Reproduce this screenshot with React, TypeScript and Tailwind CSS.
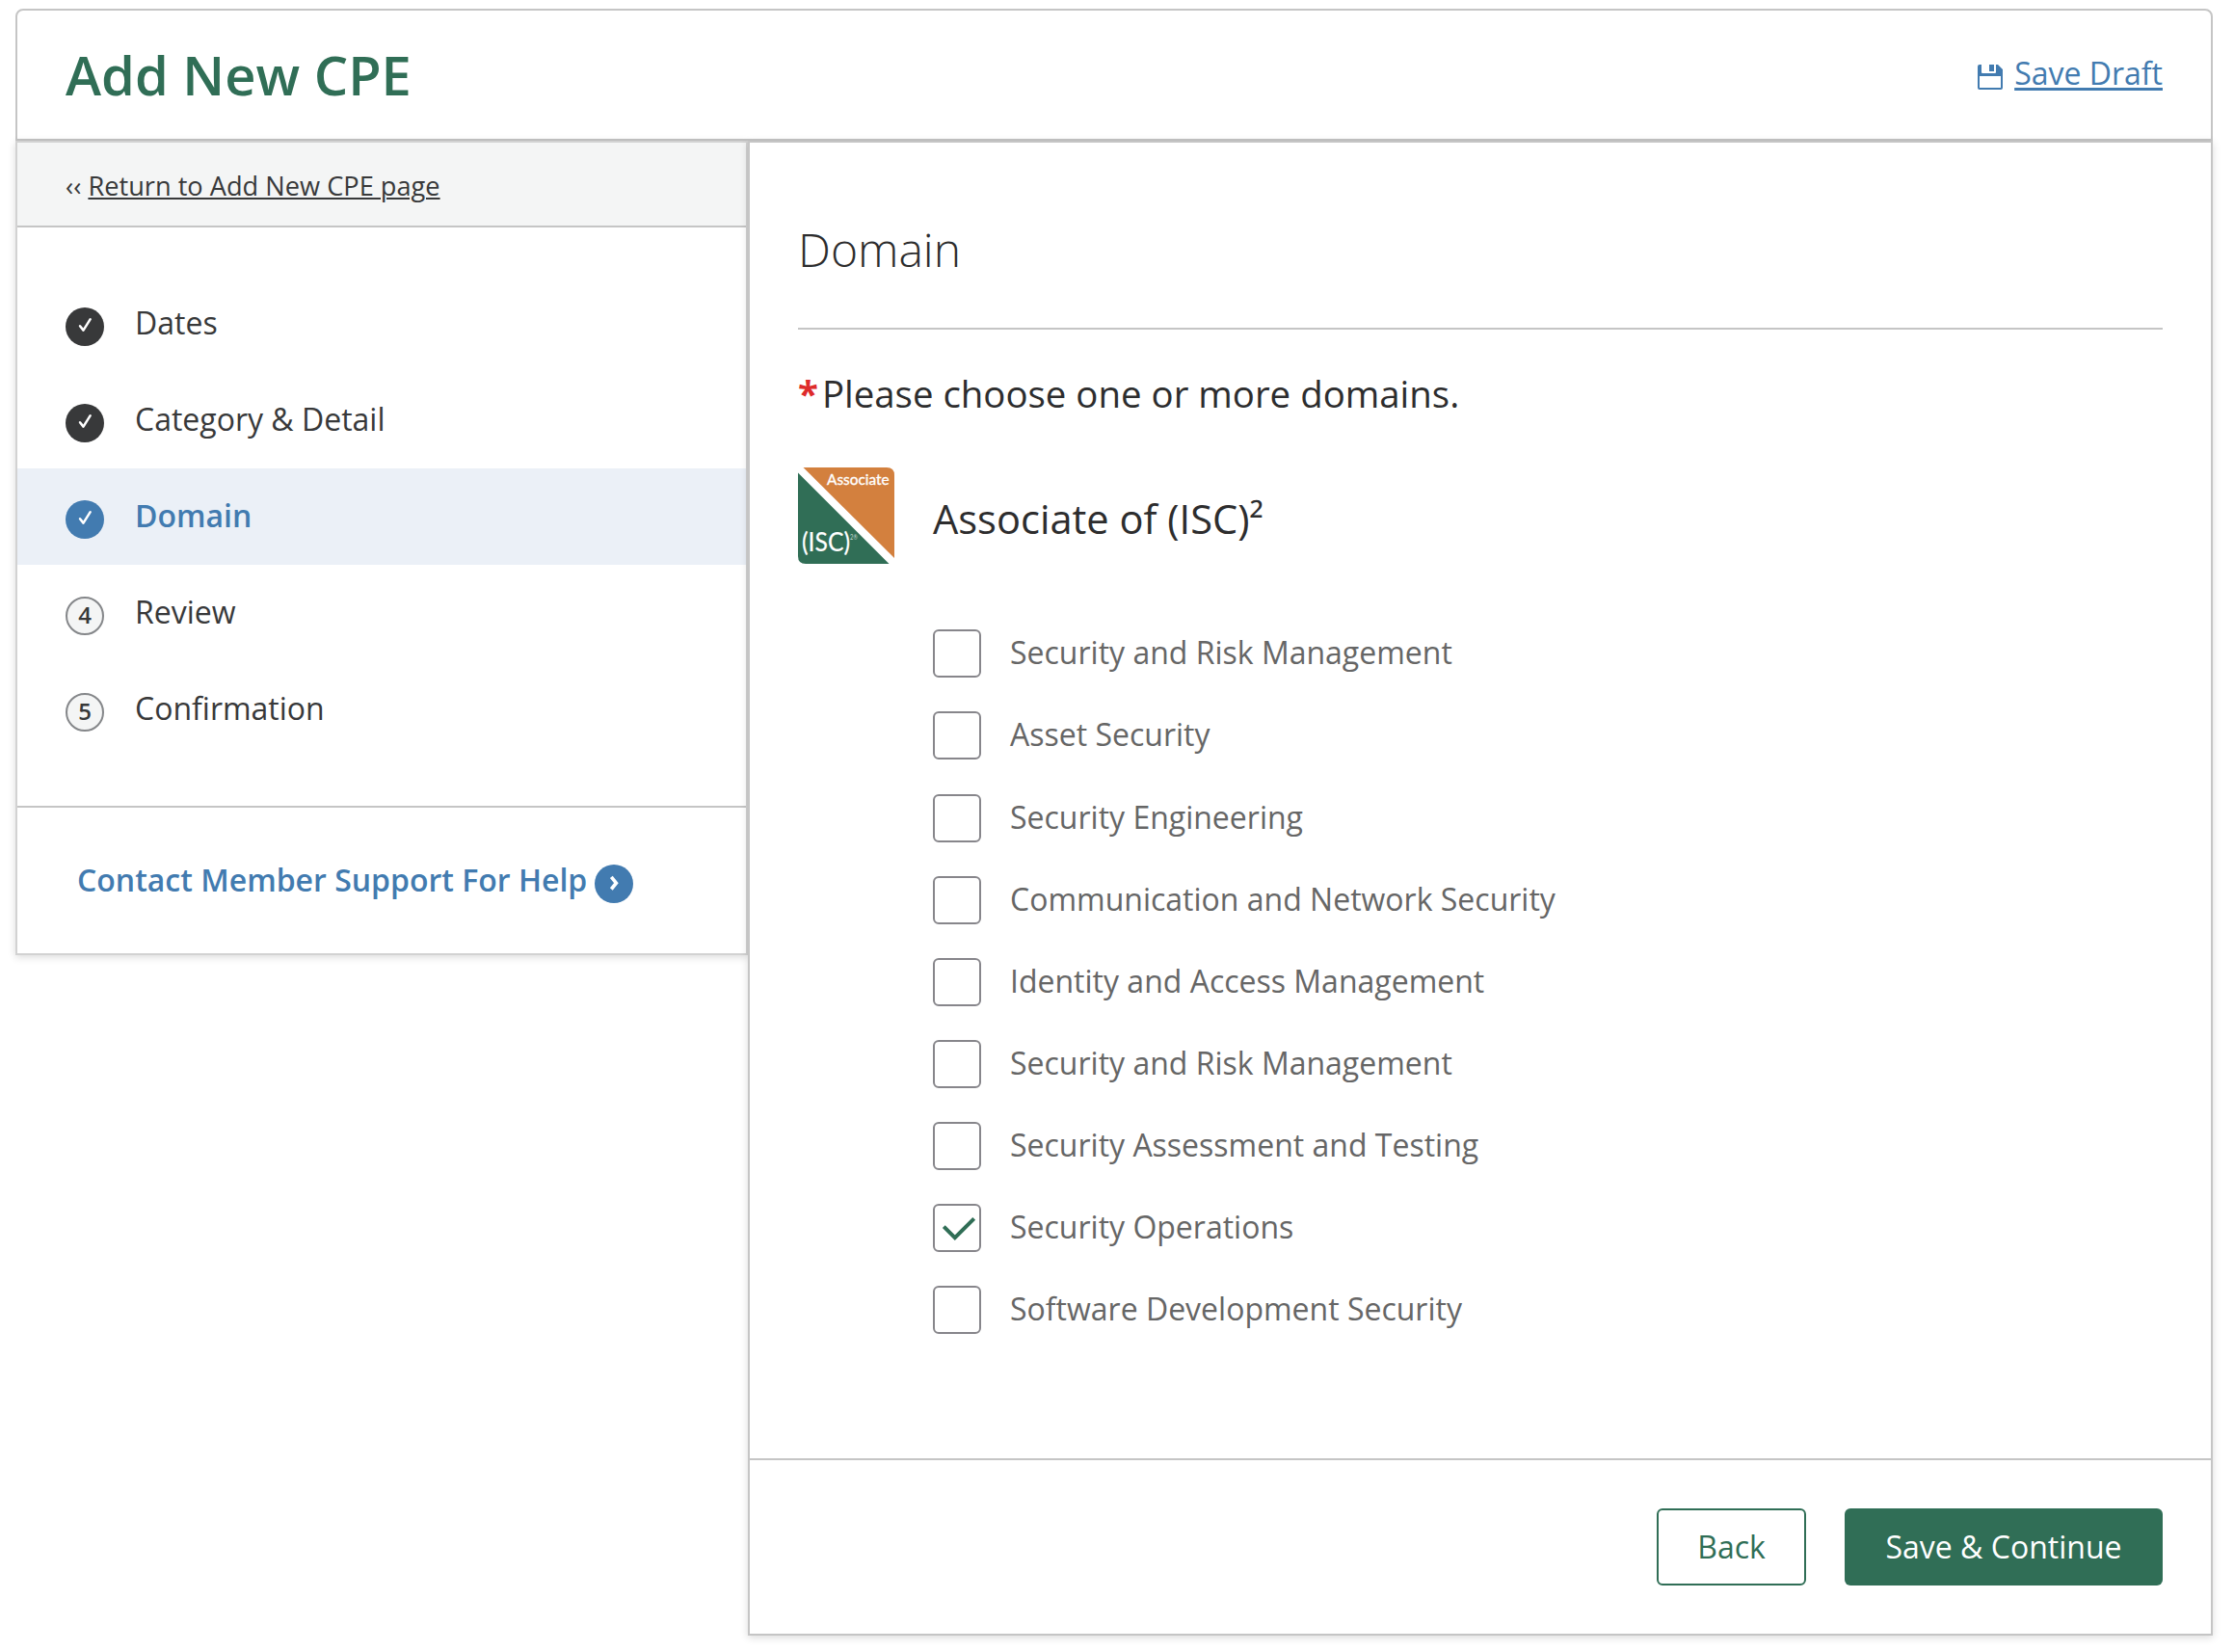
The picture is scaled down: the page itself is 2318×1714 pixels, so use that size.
import { useState } from "react";

type Step = { label: string; state: "done" | "current" | "todo" };

const steps: Step[] = [
  { label: "Dates", state: "done" },
  { label: "Category & Detail", state: "done" },
  { label: "Domain", state: "current" },
  { label: "Review", state: "todo" },
  { label: "Confirmation", state: "todo" },
];

const domains = [
  "Security and Risk Management",
  "Asset Security",
  "Security Engineering",
  "Communication and Network Security",
  "Identity and Access Management",
  "Security and Risk Management",
  "Security Assessment and Testing",
  "Security Operations",
  "Software Development Security",
];

function SaveIcon() {
  return (
    <svg className="mt-[5px] block h-[26px] w-[26px]" viewBox="0 0 26 26" fill="none">
      <path
        fill="#427bb0"
        fillRule="evenodd"
        d="M2 0H4V8Q4 9 5 9H18Q19 9 19 8V0H21L26 5V24Q26 26 24 26H2Q0 26 0 24V2Q0 0 2 0ZM2 12V24H24V12Z"
      />
      <path fill="#427bb0" d="M12 0H17V7H12Z" />
    </svg>
  );
}

function StepMark({ state, number }: { state: Step["state"]; number: number }) {
  if (state === "todo") {
    return (
      <span className="mt-1.5 flex h-10 w-10 items-center justify-center rounded-full border-2 border-[#85878a] bg-[#f4f5f5] pb-0.5 text-2xl leading-none font-semibold">
        {number}
      </span>
    );
  }
  return (
    <span
      className={
        "mt-1.5 block h-10 w-10 rounded-full " + (state === "current" ? "bg-[#427bb0]" : "bg-[#38393a]")
      }
    >
      <svg className="block h-10 w-10" viewBox="0 0 40 40" fill="none">
        <path
          d="M15 19.2L18.5 23.6L25.7 12.2"
          stroke="#fff"
          strokeWidth="2.5"
          strokeLinecap="round"
          strokeLinejoin="round"
        />
      </svg>
    </span>
  );
}

function Badge() {
  return (
    <svg className="block h-[100px] w-[100px] shrink-0" viewBox="0 0 100 100">
      <path fill="#d3803e" d="M5.5 0H92Q100 0 100 8V94Z" />
      <path fill="#306e56" d="M0 5.5L94.5 100H8Q0 100 0 92Z" />
      <text
        x="30"
        y="18"
        fill="#fff"
        stroke="#fff"
        strokeWidth="0.35"
        fontFamily="Lato"
        fontSize="15.6"
        textLength="64.5"
        lengthAdjust="spacingAndGlyphs"
      >
        Associate
      </text>
      <text
        x="4"
        y="86.5"
        fill="#fff"
        stroke="#fff"
        strokeWidth="0.2"
        fontFamily="Lato"
        fontSize="26"
        textLength="50"
        lengthAdjust="spacingAndGlyphs"
      >
        (ISC)
      </text>
      <text x="54" y="75" fill="#c4dacf" fontFamily="Lato" fontSize="8" textLength="8" lengthAdjust="spacingAndGlyphs">
        2®
      </text>
    </svg>
  );
}

export default function App() {
  const [checked, setChecked] = useState<number[]>([7]);
  const toggle = (i: number) =>
    setChecked((c) => (c.includes(i) ? c.filter((n) => n !== i) : [...c, i]));

  return (
    <div className="h-[1714px] w-[2318px] overflow-hidden bg-white pt-[9px] pl-4 font-['Open_Sans',sans-serif] text-[#2d2d2e]">
      <div className="w-[2280px]">
        <header className="flex h-[137px] items-center justify-between rounded-t-lg border-2 border-[#c5c5c5] pr-[50px] pl-[50px]">
          <h1 className="pb-0.5 text-[56px] leading-none font-semibold text-[#306e56]">Add New CPE</h1>
          <a href="#" className="flex items-center gap-3 text-[#427bb0]">
            <SaveIcon />
            <span className="pb-[3px] text-[32px] leading-10 underline decoration-[3px] underline-offset-[3px]">
              Save Draft
            </span>
          </a>
        </header>

        <div className="flex items-start">
          <aside className="w-[760px] border-2 border-[#d2d2d2] text-[#38393a] shadow-[0_2px_8px_rgba(0,0,0,0.15)]">
            <div className="flex h-[88px] items-center border-b-2 border-[#c5c5c5] bg-[#f4f5f5] pt-[5px] pl-[50px] text-[27.2px]">
              <span>‹‹&nbsp;</span>
              <a href="#" className="underline decoration-2 underline-offset-[2px]">
                Return to Add New CPE page
              </a>
            </div>
            <nav className="py-[50px]">
              {steps.map((s, i) => (
                <a
                  href="#"
                  key={s.label}
                  className={
                    "flex h-[100px] items-center gap-8 pl-[50px] text-[32px] " +
                    (s.state === "current" ? "bg-[#ebf0f7]" : "")
                  }
                >
                  <StepMark state={s.state} number={i + 1} />
                  <span className={s.state === "current" ? "pb-0.5 font-semibold text-[#427bb0]" : "pb-0.5"}>
                    {s.label}
                  </span>
                </a>
              ))}
            </nav>
            <div className="flex h-[153px] items-center gap-2 border-t-2 border-[#c5c5c5] pl-[62px] text-[32px] font-semibold text-[#427bb0]">
              <a href="#" className="pb-0.5">
                Contact Member Support For Help
              </a>
              <span className="mt-1.5 block h-10 w-10 rounded-full bg-[#427bb0]">
                <svg className="block h-10 w-10" viewBox="0 0 40 40" fill="none">
                  <path d="M17.3 12.9L22.4 19.2L17.3 25.5" stroke="#fff" strokeWidth="3.6" />
                </svg>
              </span>
            </div>
          </aside>

          <main className="relative h-[1551px] w-[1520px] border-2 border-[#c5c5c5] bg-white shadow-[0_2px_8px_rgba(0,0,0,0.15)]">
            <div className="h-[1365px] px-[50px]">
              <h2 className="h-[194px] border-b-2 border-[#c5c5c5] pt-[81px] text-[48px] leading-[60px] font-light">
                Domain
              </h2>
              <p className="mt-[41px] text-[38.4px] leading-[50px]">
                <span className="font-bold text-[#de2b2b]">*</span>
                <span className="ml-1">Please choose one or more domains.</span>
              </p>
              <div className="mt-[52px] flex items-center gap-10">
                <Badge />
                <h3 className="pt-1.5 text-[41.6px] leading-[50px]">
                  Associate of (ISC)<span className="font-medium">²</span>
                </h3>
              </div>
              <ul className="mt-[68.35px] flex flex-col gap-[35.1px] pl-[140px] text-[32px] text-[#666]">
                {domains.map((d, i) => (
                  <li key={i} className="h-[50px]">
                    <label className="flex items-center gap-[30px]">
                      <input
                        type="checkbox"
                        className="sr-only"
                        checked={checked.includes(i)}
                        onChange={() => toggle(i)}
                      />
                      <span className="flex h-[50px] w-[50px] items-center justify-center rounded-md border-2 border-[#87868b] bg-white">
                        {checked.includes(i) && (
                          <svg className="h-[46px] w-[46px]" viewBox="0 0 46 46" fill="none">
                            <path d="M9.3 21.7L20.8 33.2L40.7 13.3" stroke="#306e56" strokeWidth="4" />
                          </svg>
                        )}
                      </span>
                      <span className="pb-[2.8px] leading-[47.2px]">{d}</span>
                    </label>
                  </li>
                ))}
              </ul>
            </div>
            <footer className="flex justify-end gap-10 border-t-2 border-[#c5c5c5] pt-[50px] pr-[50px] text-[32px]">
              <button className="h-20 w-[155px] rounded-md border-2 border-[#306e56] text-[#306e56]">Back</button>
              <button className="h-20 w-[330px] rounded-md bg-[#306e56] text-white">Save &amp; Continue</button>
            </footer>
          </main>
        </div>
      </div>
    </div>
  );
}
